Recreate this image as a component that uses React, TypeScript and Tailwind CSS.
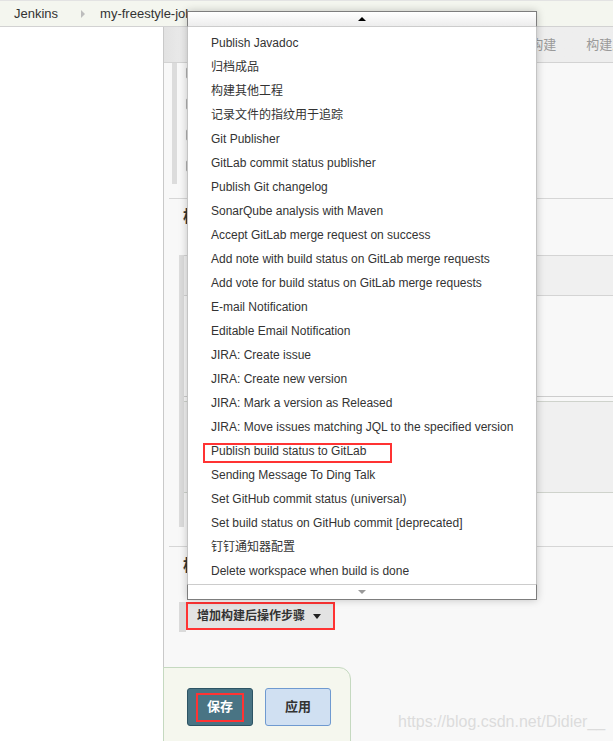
import React from "react";

const publishers = [
  "Publish Javadoc",
  "归档成品",
  "构建其他工程",
  "记录文件的指纹用于追踪",
  "Git Publisher",
  "GitLab commit status publisher",
  "Publish Git changelog",
  "SonarQube analysis with Maven",
  "Accept GitLab merge request on success",
  "Add note with build status on GitLab merge requests",
  "Add vote for build status on GitLab merge requests",
  "E-mail Notification",
  "Editable Email Notification",
  "JIRA: Create issue",
  "JIRA: Create new version",
  "JIRA: Mark a version as Released",
  "JIRA: Move issues matching JQL to the specified version",
  "Publish build status to GitLab",
  "Sending Message To Ding Talk",
  "Set GitHub commit status (universal)",
  "Set build status on GitHub commit [deprecated]",
  "钉钉通知器配置",
  "Delete workspace when build is done",
];

const tabs = ["General", "源码管理", "构建触发器", "构建环境", "构建", "构建后操作"];

function PublisherMenu() {
  return (
    <div className="absolute left-[187px] top-[11px] flex w-[350px] flex-col shadow-[0_0_8px_rgba(0,0,0,0.22)]">
      <div className="flex h-[16px] items-center justify-center border border-[#7d7d7d] border-b-[#cccccc] bg-gradient-to-b from-white to-[#ededed]">
        <div className="h-0 w-0 border-x-[4px] border-b-[4px] border-x-transparent border-b-black" />
      </div>
      <div className="border-x border-[#c4c4c4] bg-white pb-[1px] pt-[4px]">
        {publishers.map((name) => (
          <div
            key={name}
            className="relative flex h-[24px] items-center whitespace-nowrap pl-[23px] text-[12px] leading-[14px] text-[#333]"
          >
            {name}
            {name === "Publish build status to GitLab" && (
              <span className="absolute left-[15px] top-[4px] h-[20px] w-[189px] border-2 border-[#ff3333]" />
            )}
          </div>
        ))}
      </div>
      <div className="flex h-[16px] items-center justify-center border border-[#7d7d7d] border-t-[#cccccc] bg-white">
        <div className="h-0 w-0 border-x-[4px] border-t-[4px] border-x-transparent border-t-[#9a9a9a]" />
      </div>
    </div>
  );
}

export default function App() {
  return (
    <div className="relative h-[741px] w-[613px] overflow-hidden bg-white text-[#333] [font-family:'Liberation_Sans','Noto_Sans_CJK_SC',sans-serif]">
      {/* breadcrumb bar */}
      <div className="flex h-[27px] items-center border-y border-t-[#e3e3e3] border-b-[#d2d2d2] bg-[#f4f6ef] pl-[14px] text-[13px] leading-[15px]">
        <span>Jenkins</span>
        <span className="ml-[23px] h-0 w-0 border-y-[4px] border-l-[4px] border-y-transparent border-l-[#bdbdbd]" />
        <span className="ml-[15px] whitespace-nowrap">my-freestyle-job</span>
      </div>

      <div className="flex h-[714px]">
        <div className="w-[163px] shrink-0 bg-white" />

        <div className="flex min-w-0 flex-1 flex-col border-l border-[#c9c9c9] bg-[#f8f8f8]">
          {/* config tabs */}
          <div className="flex h-[36px] shrink-0 items-center overflow-hidden whitespace-nowrap border-b border-[#d3d3d3] bg-gradient-to-r from-[#e2e2e2] via-[#eeeeee] via-[6%] to-[#eeeeee] pl-[16px] text-[13px] text-[#9a9a9a]">
            {tabs.map((t) => (
              <span key={t} className="shrink-0 px-[15px]">
                {t}
              </span>
            ))}
          </div>

          {/* general options */}
          <div className="ml-[5px] flex h-[136px] shrink-0 border-b border-[#d6d6d6]">
            <div className="ml-[3px] h-[121px] w-[5px] bg-[#dcdcdc]" />
            <div className="ml-[9px] flex flex-col gap-[19px] pt-[4px]">
              {[0, 1, 2, 3].map((i) => (
                <div key={i} className="h-[12px] w-[12px] rounded-[2px] border border-[#b0b0b0] bg-white" />
              ))}
            </div>
          </div>

          {/* build */}
          <div className="ml-[5px] flex h-[348px] shrink-0 flex-col border-b border-[#d6d6d6]">
            <div className="h-[56px] pl-[14px] pt-[8px] text-[16px] font-bold leading-[20px] text-[#333]">构建</div>
            <div className="flex h-[272px]">
              <div className="ml-[10px] w-[5px] bg-[#dcdcdc]" />
              <div className="flex flex-1 flex-col">
                <div className="h-[41px] border-y border-[#d4d4d4] bg-[#f0f0f0]" />
                <div className="h-[101px] border-b border-[#cdcdcd] bg-[#f8f8f8]" />
                <div className="mt-[4px] h-[92px] border-y border-[#cfd3cc] bg-[#f0f0f0]" />
                <div className="flex-1" />
              </div>
            </div>
          </div>

          {/* post-build actions */}
          <div className="ml-[5px] flex h-[120px] shrink-0 flex-col">
            <div className="pl-[14px] pt-[9px] text-[16px] font-bold leading-[20px] text-[#333]">构建后操作</div>
            <div className="ml-[10px] mt-[26px] flex h-[30px]">
              <div className="w-[7px] bg-[#dadada]" />
              <button className="flex h-[28px] w-[149px] items-center border-2 border-[#ff3333] bg-[#e3e3e3] pl-[9px] text-[12px] font-bold leading-[14px] text-[#333]">
                增加构建后操作步骤
                <span className="ml-[8px] h-0 w-0 border-x-[4px] border-t-[5px] border-x-transparent border-t-[#222]" />
              </button>
            </div>
          </div>

          {/* save bar */}
          <div className="-ml-px flex h-[80px] w-[188px] shrink-0 gap-[12px] rounded-tr-[12px] border border-[#c5d9c0] bg-[#f5f7ee] pl-[23px] pt-[20px]">
            <button className="flex h-[38px] w-[66px] items-center justify-center rounded-[3px] border border-[#2d5464] bg-[#497484]">
              <span className="flex h-[29px] w-[48px] items-center justify-center border-2 border-[#ff3333] text-[13px] font-bold text-white">
                保存
              </span>
            </button>
            <button className="flex h-[38px] w-[66px] items-center justify-center rounded-[3px] border border-[#6f9ad0] bg-[#d0e0f2] text-[13px] font-bold text-[#333]">
              应用
            </button>
          </div>
        </div>
      </div>

      <PublisherMenu />

      <div className="absolute left-[398px] top-[714px] whitespace-nowrap text-[16px] leading-[16px] text-[#dcdcdc]">
        https://blog.csdn.net/Didier__
      </div>
    </div>
  );
}
